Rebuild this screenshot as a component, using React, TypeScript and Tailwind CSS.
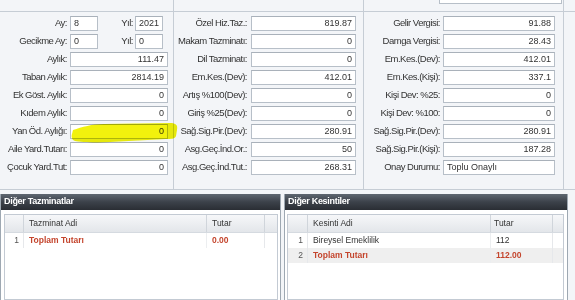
import React from 'react';

type Row = { label: string; value: string; align?: 'left' | 'right' };

const middleRows: Row[] = [
  { label: 'Özel Hiz.Taz.:', value: '819.87' },
  { label: 'Makam Tazminatı:', value: '0' },
  { label: 'Dil Tazminatı:', value: '0' },
  { label: 'Em.Kes.(Dev):', value: '412.01' },
  { label: 'Artış %100(Dev):', value: '0' },
  { label: 'Giriş %25(Dev):', value: '0' },
  { label: 'Sağ.Sig.Pir.(Dev):', value: '280.91' },
  { label: 'Asg.Geç.İnd.Or.:', value: '50' },
  { label: 'Asg.Geç.İnd.Tut.:', value: '268.31' },
];

const rightRows: Row[] = [
  { label: 'Gelir Vergisi:', value: '91.88' },
  { label: 'Damga Vergisi:', value: '28.43' },
  { label: 'Em.Kes.(Dev):', value: '412.01' },
  { label: 'Em.Kes.(Kişi):', value: '337.1' },
  { label: 'Kişi Dev: %25:', value: '0' },
  { label: 'Kişi Dev: %100:', value: '0' },
  { label: 'Sağ.Sig.Pir.(Dev):', value: '280.91' },
  { label: 'Sağ.Sig.Pir.(Kişi):', value: '187.28' },
  { label: 'Onay Durumu:', value: 'Toplu Onaylı', align: 'left' },
];

const leftRows: Row[] = [
  { label: 'Aylık:', value: '111.47' },
  { label: 'Taban Aylık:', value: '2814.19' },
  { label: 'Ek Göst. Aylık:', value: '0' },
  { label: 'Kıdem Aylık:', value: '0' },
  { label: 'Yan Öd. Aylığı:', value: '0' },
  { label: 'Aile Yard.Tutarı:', value: '0' },
  { label: 'Çocuk Yard.Tut:', value: '0' },
];

const Field = ({ value, w, align = 'right' }: { value: string; w: string; align?: 'left' | 'right' }) => (
  <div
    className={`${w} h-[15px] bg-white border border-[#b7bfc8] border-t-[#a9b1ba] text-[9px] leading-[13px] px-[3px] whitespace-nowrap ${
      align === 'left' ? 'text-left' : 'text-right'
    }`}
  >
    {value}
  </div>
);

const Label = ({ text, w }: { text: string; w: string }) => (
  <div className={`${w} text-right text-[9.5px] tracking-[-0.5px] whitespace-nowrap text-[#333]`}>{text}</div>
);

const Highlight = () => (
  <svg
    className="absolute left-[70px] top-[121px] mix-blend-multiply pointer-events-none"
    width="110"
    height="24"
    viewBox="0 0 110 24"
  >
    <defs>
      <filter id="soft" x="-5%" y="-20%" width="110%" height="140%">
        <feGaussianBlur stdDeviation="0.7" />
      </filter>
    </defs>
    <path
      d="M3 9 C 12 6, 22 3, 34 3 L 100 2 C 106 2, 108 4, 107 9 L 106 15 C 105 18, 101 18, 96 18 L 40 21 C 25 22, 10 21, 5 20 C 2 19, 1 16, 2 13 Z"
      fill="#f2f20e"
      filter="url(#soft)"
    />
  </svg>
);

const GridHeader = ({ cols }: { cols: { w: string; text: string; pad?: string }[] }) => (
  <div className="flex h-[18px] bg-gradient-to-b from-[#f6f7f9] to-[#e3e6ea] border-b border-[#d5dae0]">
    {cols.map((c, i) => (
      <div
        key={i}
        className={`${c.w} ${c.pad ?? 'pl-[4px]'} flex items-center text-[8.5px] text-[#333] border-r border-[#d0d5db] whitespace-nowrap`}
      >
        {c.text}
      </div>
    ))}
    <div className="flex-1" />
  </div>
);

const GridRow = ({
  n,
  name,
  amount,
  total,
  shaded,
  widths,
}: {
  n: number;
  name: string;
  amount: string;
  total?: boolean;
  shaded?: boolean;
  widths: [string, string, string];
}) => (
  <div className={`flex h-[15px] text-[8.5px] ${shaded ? 'bg-[#efefef]' : 'bg-white'}`}>
    <div className={`${widths[0]} text-right pr-[4px] flex items-center justify-end text-[#555] border-r border-[#e6e8eb]`}>{n}</div>
    <div
      className={`${widths[1]} pl-[5px] flex items-center border-r border-[#eceef0] ${
        total ? 'font-bold text-[#c4452d]' : 'text-[#333]'
      }`}
    >
      {name}
    </div>
    <div
      className={`${widths[2]} pl-[5px] flex items-center border-r border-[#e6e8eb] ${
        total ? 'font-bold text-[#c4452d]' : 'text-[#333]'
      }`}
    >
      {amount}
    </div>
  </div>
);

const BottomPanel = ({ title, children, w, inner }: { title: string; children: React.ReactNode; w: string; inner: string }) => (
  <div className={`${w} h-[106px] flex flex-col border-x border-[#9ea8b2] bg-white`}>
    <div className="h-[16px] flex items-center pl-[3px] bg-gradient-to-b from-[#5f6771] via-[#3c424a] to-[#2a2e34] text-white font-bold text-[9px] tracking-[-0.3px]">
      {title}
    </div>
    <div className={`flex-1 pt-[4px] ${inner}`}>
      <div className="h-full border border-[#c3cad3] bg-white">{children}</div>
    </div>
  </div>
);

export default function App() {
  return (
    <div className="relative w-[575px] h-[300px] overflow-hidden bg-[#f3f5f8] font-['Liberation_Sans',Arial,sans-serif] text-[#333]">
      {/* remnant of the row above */}
      <div className="flex h-[12px] border-b border-[#c6cdd5]">
        <div className="w-[174px] border-r border-[#c6cdd5]" />
        <div className="w-[190px] border-r border-[#c6cdd5]" />
        <div className="w-[200px] border-r border-[#c6cdd5]">
          <div className="ml-[75px] w-[123px] h-[4px] bg-white border-x border-b border-[#b7bfc8]" />
        </div>
      </div>

      {/* form panels */}
      <div className="flex h-[178px] border-b border-[#c6cdd5]">
        <div className="w-[174px] border-r border-[#c6cdd5] pl-[3px] pt-[4px] flex flex-col gap-[3px]">
          <div className="flex items-center">
            <Label text="Ay:" w="w-[64px]" />
            <div className="ml-[3px]">
              <Field value="8" w="w-[28px]" align="left" />
            </div>
            <Label text="Yıl:" w="w-[35px]" />
            <div className="ml-[2px]">
              <Field value="2021" w="w-[28px]" align="left" />
            </div>
          </div>
          <div className="flex items-center">
            <Label text="Gecikme Ay:" w="w-[64px]" />
            <div className="ml-[3px]">
              <Field value="0" w="w-[28px]" align="left" />
            </div>
            <Label text="Yıl:" w="w-[35px]" />
            <div className="ml-[2px]">
              <Field value="0" w="w-[28px]" align="left" />
            </div>
          </div>
          {leftRows.map((r) => (
            <div key={r.label} className="flex items-center gap-[3px]">
              <Label text={r.label} w="w-[64px]" />
              <Field value={r.value} w="w-[98px]" />
            </div>
          ))}
        </div>

        <div className="w-[190px] border-r border-[#c6cdd5] pt-[4px] flex flex-col gap-[3px]">
          {middleRows.map((r) => (
            <div key={r.label} className="flex items-center gap-[4px]">
              <Label text={r.label} w="w-[73px]" />
              <Field value={r.value} w="w-[105px]" />
            </div>
          ))}
        </div>

        <div className="w-[200px] border-r border-[#c6cdd5] pt-[4px] flex flex-col gap-[3px]">
          {rightRows.map((r) => (
            <div key={r.label} className="flex items-center gap-[3px]">
              <Label text={r.label} w="w-[76px]" />
              <Field value={r.value} w="w-[112px]" align={r.align} />
            </div>
          ))}
        </div>
      </div>

      {/* grids */}
      <div className="flex gap-[3px] mt-[4px]">
        <BottomPanel title="Diğer Tazminatlar" w="w-[281px]" inner="pl-[3px] pr-[2px]">
          <GridHeader
            cols={[
              { w: 'w-[19px]', text: '' },
              { w: 'w-[183px]', text: 'Tazminat Adi', pad: 'pl-[5px]' },
              { w: 'w-[58px]', text: 'Tutar', pad: 'pl-[5px]' },
            ]}
          />
          <GridRow n={1} name="Toplam Tutarı" amount="0.00" total widths={['w-[19px]', 'w-[183px]', 'w-[58px]']} />
        </BottomPanel>
        <BottomPanel title="Diğer Kesintiler" w="w-[284px]" inner="pl-[2px] pr-[3px]">
          <GridHeader
            cols={[
              { w: 'w-[20px]', text: '' },
              { w: 'w-[183px]', text: 'Kesinti Adi', pad: 'pl-[5px]' },
              { w: 'w-[62px]', text: 'Tutar', pad: 'pl-[3px]' },
            ]}
          />
          <GridRow n={1} name="Bireysel Emeklilik" amount="112" widths={['w-[20px]', 'w-[183px]', 'w-[62px]']} />
          <GridRow n={2} name="Toplam Tutarı" amount="112.00" total shaded widths={['w-[20px]', 'w-[183px]', 'w-[62px]']} />
        </BottomPanel>
      </div>

      <Highlight />
    </div>
  );
}
